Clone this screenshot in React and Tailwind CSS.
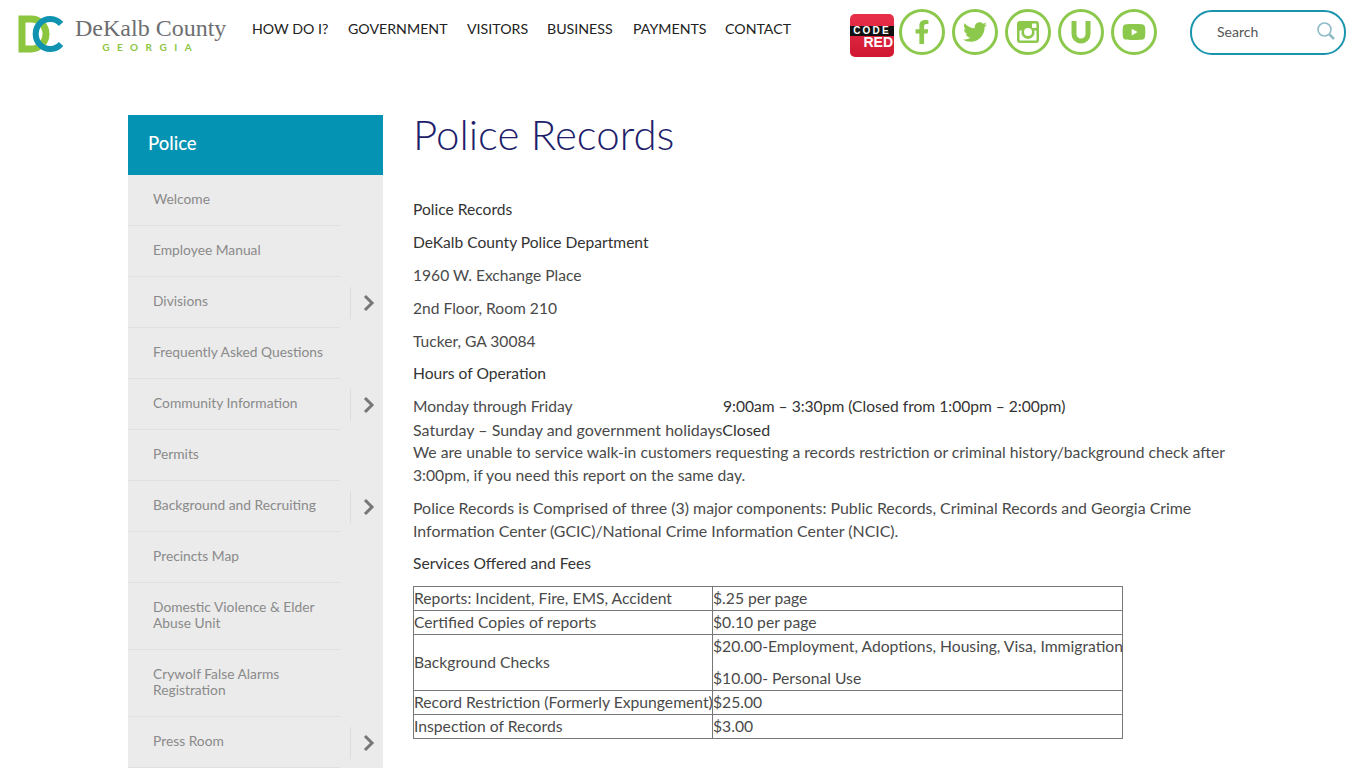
import React from "react";
import { FaFacebookF, FaTwitter, FaYoutube } from "react-icons/fa";

const NAV = [
  { label: "HOW DO I?", cls: "w-[96px]" },
  { label: "GOVERNMENT", cls: "w-[119px]" },
  { label: "VISITORS", cls: "w-[80px]" },
  { label: "BUSINESS", cls: "w-[86px]" },
  { label: "PAYMENTS", cls: "w-[92px]" },
  { label: "CONTACT", cls: "w-[125px]" },
];

const MENU = [
  { label: ["Welcome"] },
  { label: ["Employee Manual"] },
  { label: ["Divisions"], sub: true },
  { label: ["Frequently Asked Questions"] },
  { label: ["Community Information"], sub: true },
  { label: ["Permits"] },
  { label: ["Background and Recruiting"], sub: true },
  { label: ["Precincts Map"] },
  { label: ["Domestic Violence & Elder", "Abuse Unit"] },
  { label: ["Crywolf False Alarms", "Registration"] },
  { label: ["Press Room"], sub: true },
];

const FEES = [
  ["Reports: Incident, Fire, EMS, Accident", "$.25 per page"],
  ["Certified Copies of reports", "$0.10 per page"],
  ["Background Checks", null],
  ["Record Restriction (Formerly Expungement)", "$25.00"],
  ["Inspection of Records", "$3.00"],
];

const Logo = () => (
  <div className="flex items-center w-[234px] pl-[18px]">
    <svg width="46" height="38" viewBox="0 0 46 38" className="shrink-0">
      <path d="M4 4h9a15 15 0 0 1 0 30H4z" fill="none" stroke="#8cc63f" strokeWidth="7" />
      <path d="M43 9a14.500 15 0 1 0 0 20" fill="none" stroke="#0f93b0" strokeWidth="6" />
    </svg>
    <div className="ml-[11px] flex flex-col items-center">
      <span className="text-[24px] leading-[26px] text-[#6d6e71] font-['Liberation_Serif',serif] whitespace-nowrap">DeKalb County</span>
      <span className="text-[10px] leading-[12px] font-bold tracking-[0.75em] text-[#8cc63f] font-['Lato',sans-serif]">GEORGIA</span>
    </div>
  </div>
);

const CodeRed = () => (
  <div className="w-[44px] h-[43px] rounded-[5px] bg-gradient-to-b from-[#e8304a] to-[#d01632] flex flex-col items-center pt-[12px] overflow-hidden">
    <span className="w-full text-center bg-[#111] text-white text-[10px] leading-[10px] font-bold font-['Liberation_Sans',sans-serif] tracking-[0.22em]">CODE</span>
    <span className="w-full text-right pr-[1px] mt-[1px] text-white text-[14px] leading-[11px] font-bold font-['Liberation_Sans',sans-serif]">RED</span>
  </div>
);

const Social = ({ children }) => (
  <div className="w-[46px] h-[46px] rounded-full border-[3px] border-[#8cc84b] flex items-center justify-center text-[#8cc84b] text-[24px] shrink-0">
    {children}
  </div>
);

const Header = () => (
  <header className="flex h-[64px] items-start">
    <div className="pt-[15px]">
      <Logo />
    </div>
    <nav className="flex ml-[18px] pt-[20px] text-[14.2px] leading-[18px] text-[#222] font-['Lato',sans-serif]">
      {NAV.map((n) => (
        <a key={n.label} className={`${n.cls} whitespace-nowrap`}>{n.label}</a>
      ))}
    </nav>
    <div className="pt-[14px]">
      <CodeRed />
    </div>
    <div className="flex ml-[5px] gap-[7px] pt-[9px]">
      <Social><FaFacebookF /></Social>
      <Social><FaTwitter /></Social>
      <Social>
        <svg width="24" height="24" viewBox="0 0 24 24">
          <path fillRule="evenodd" d="M4 1h16a3 3 0 0 1 3 3v16a3 3 0 0 1-3 3H4a3 3 0 0 1-3-3V4a3 3 0 0 1 3-3zM3.500 10.500V20a.5.5 0 0 0 .5.5h16a.5.5 0 0 0 .5-.5v-9.500h-2.300a6.500 6.500 0 1 1-12.400 0zM12 8a4 4 0 1 0 0 8 4 4 0 0 0 0-8zM17 3.500a1 1 0 0 0-1 1V7a1 1 0 0 0 1 1h2.500a1 1 0 0 0 1-1V4.500a1 1 0 0 0-1-1z" fill="currentColor" />
        </svg>
      </Social>
      <Social>
        <svg width="24" height="26" viewBox="0 0 24 26">
          <path d="M5 2v13a7 7 0 0 0 14 0V2" fill="none" stroke="currentColor" strokeWidth="5" />
        </svg>
      </Social>
      <Social><FaYoutube /></Social>
    </div>
    <div className="ml-[33px] mt-[10px] w-[156px] h-[45px] rounded-[22px] border-2 border-[#1a93ad] flex items-center pl-[25px] pr-[8px] justify-between">
      <span className="text-[14px] text-[#555] mb-[2px] font-['Lato',sans-serif]">Search</span>
      <svg width="20" height="20" viewBox="0 0 20 20" fill="none" stroke="#8dbcc6" className="mb-[3px]">
        <circle cx="8.500" cy="8.500" r="6.500" strokeWidth="1.600" />
        <path d="M13.500 13.500l4.500 4.500" strokeWidth="2.500" />
      </svg>
    </div>
  </header>
);

const Sidebar = () => (
  <aside className="w-[255px] shrink-0 bg-[#ebebeb] font-['Lato',sans-serif]">
    <div className="h-[60px] bg-[#0493b2] text-white text-[18.500px] font-medium pl-[20px] pb-[3px] flex items-center">Police</div>
    {MENU.map((m) => (
      <div key={m.label[0]} className="flex">
        <div className="w-[212px] border-b border-[#e0e0e0] pl-[25px] pr-[5px] pt-[16px] pb-[18px] text-[13.800px] leading-[16px] text-[#8a8a8a]">
          {m.label.map((l) => (
            <div key={l}>{l}</div>
          ))}
        </div>
        {m.sub && (
          <div className="ml-[10px] mt-[10px] mb-[9px] w-[33px] pl-[4px] border-l border-[#dcdcdc] flex items-center justify-center">
            <svg width="12" height="18" viewBox="0 0 12 18" fill="none" stroke="#777" strokeWidth="3">
              <path d="M2 2l7 7-7 7" />
            </svg>
          </div>
        )}
      </div>
    ))}
  </aside>
);

const Main = () => (
  <main className="ml-[30px] w-[823px] text-[15.600px] leading-[23px] text-[#4a4a4a] font-['Lato',sans-serif]">
    <h1 className="text-[42px] leading-[42px] font-light text-[#211d6b] mb-[41px] -mt-[2px] pb-[2px]">Police Records</h1>
    <p className="mb-[10px] text-[#333]">Police Records</p>
    <p className="mb-[10px] text-[#333]">DeKalb County Police Department</p>
    <p className="mb-[10px]">1960 W. Exchange Place</p>
    <p className="mb-[10px]">2nd Floor, Room 210</p>
    <p className="mb-[9px]">Tucker, GA 30084</p>
    <p className="mb-[10px] text-[#333]">Hours of Operation</p>
    <div className="flex">
      <span className="w-[310px]">Monday through Friday</span>
      <span className="text-[#333]">9:00am – 3:30pm (Closed from 1:00pm – 2:00pm)</span>
    </div>
    <div className="text-[16px] h-[23px]">
      Saturday – Sunday and government holidays<span className="text-[#333]">Closed</span>
    </div>
    <p className="mb-[9px] text-[15.700px]">
      We are unable to service walk-in customers requesting a records restriction or criminal history/background check after 3:00pm, if you need this report on the same day.
    </p>
    <p className="mb-[10px] text-[15.900px]">
      Police Records is Comprised of three (3) major components: Public Records, Criminal Records and Georgia Crime Information Center (GCIC)/National Crime Information Center (NCIC).
    </p>
    <p className="mb-[11px] text-[#333]">Services Offered and Fees</p>
    <table className="w-[710px] border-collapse border border-[#777] table-fixed text-[15.700px] leading-[22px]">
      <tbody>
        {FEES.map(([name, fee]) => (
          <tr key={name}>
            <td className="w-[299px] border border-[#777] p-0 pb-[1px] whitespace-nowrap">{name}</td>
            <td className="border border-[#777] p-0 pb-[1px] whitespace-nowrap">
              {fee ?? (
                <>
                  <div className="mb-[10px]">$20.00-Employment, Adoptions, Housing, Visa, Immigration</div>
                  <div>$10.00- Personal Use</div>
                </>
              )}
            </td>
          </tr>
        ))}
      </tbody>
    </table>
  </main>
);

export default function App() {
  return (
    <div className="h-screen overflow-hidden bg-white">
      <Header />
      <div className="flex pl-[128px] pt-[51px]">
        <Sidebar />
        <Main />
      </div>
    </div>
  );
}
